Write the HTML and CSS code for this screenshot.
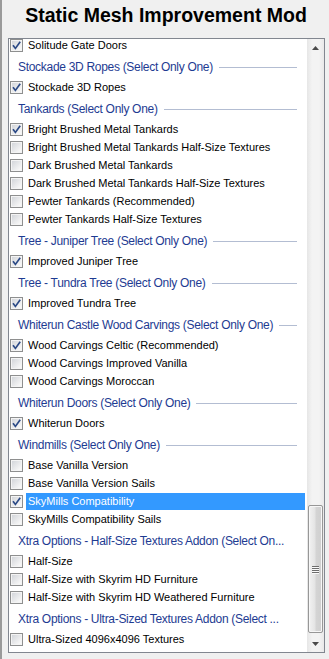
FILE: index.html
```html
<!DOCTYPE html>
<html lang="en">

<head>
  <meta charset="UTF-8">
  <title>Static Mesh Improvement Mod</title>
  <link rel="stylesheet" href="styles.css">
</head>

<body>
  <h1 class="title">Static Mesh Improvement Mod</h1>

  <div class="listbox">
    <div class="items">
      <div class="list">
        <div class="item"><span class="box on"><svg width="13" height="13"><path d="M3 6.2 L5.4 9.4 L10.2 2.8" /></svg></span><span class="label">Solitude Gate Doors</span></div>
        <div class="group"><span class="gtext">Stockade 3D Ropes (Select Only One)</span><span class="rule"></span></div>
        <div class="item"><span class="box on"><svg width="13" height="13"><path d="M3 6.2 L5.4 9.4 L10.2 2.8" /></svg></span><span class="label">Stockade 3D Ropes</span></div>
        <div class="group"><span class="gtext">Tankards (Select Only One)</span><span class="rule"></span></div>
        <div class="item"><span class="box on"><svg width="13" height="13"><path d="M3 6.2 L5.4 9.4 L10.2 2.8" /></svg></span><span class="label">Bright Brushed Metal Tankards</span></div>
        <div class="item"><span class="box"></span><span class="label">Bright Brushed Metal Tankards Half-Size Textures</span></div>
        <div class="item"><span class="box"></span><span class="label">Dark Brushed Metal Tankards</span></div>
        <div class="item"><span class="box"></span><span class="label">Dark Brushed Metal Tankards Half-Size Textures</span></div>
        <div class="item"><span class="box"></span><span class="label">Pewter Tankards (Recommended)</span></div>
        <div class="item"><span class="box"></span><span class="label">Pewter Tankards Half-Size Textures</span></div>
        <div class="group"><span class="gtext">Tree - Juniper Tree (Select Only One)</span><span class="rule"></span></div>
        <div class="item"><span class="box on"><svg width="13" height="13"><path d="M3 6.2 L5.4 9.4 L10.2 2.8" /></svg></span><span class="label">Improved Juniper Tree</span></div>
        <div class="group"><span class="gtext">Tree - Tundra Tree (Select Only One)</span><span class="rule"></span></div>
        <div class="item"><span class="box on"><svg width="13" height="13"><path d="M3 6.2 L5.4 9.4 L10.2 2.8" /></svg></span><span class="label">Improved Tundra Tree</span></div>
        <div class="group"><span class="gtext">Whiterun Castle Wood Carvings (Select Only One)</span><span class="rule"></span></div>
        <div class="item"><span class="box on"><svg width="13" height="13"><path d="M3 6.2 L5.4 9.4 L10.2 2.8" /></svg></span><span class="label">Wood Carvings Celtic (Recommended)</span></div>
        <div class="item"><span class="box"></span><span class="label">Wood Carvings Improved Vanilla</span></div>
        <div class="item"><span class="box"></span><span class="label">Wood Carvings Moroccan</span></div>
        <div class="group"><span class="gtext">Whiterun Doors (Select Only One)</span><span class="rule"></span></div>
        <div class="item"><span class="box on"><svg width="13" height="13"><path d="M3 6.2 L5.4 9.4 L10.2 2.8" /></svg></span><span class="label">Whiterun Doors</span></div>
        <div class="group"><span class="gtext">Windmills (Select Only One)</span><span class="rule"></span></div>
        <div class="item"><span class="box"></span><span class="label">Base Vanilla Version</span></div>
        <div class="item"><span class="box"></span><span class="label">Base Vanilla Version Sails</span></div>
        <div class="item selected"><span class="box on"><svg width="13" height="13"><path d="M3 6.2 L5.4 9.4 L10.2 2.8" /></svg></span><span class="label">SkyMills Compatibility</span></div>
        <div class="item"><span class="box"></span><span class="label">SkyMills Compatibility Sails</span></div>
        <div class="group"><span class="gtext">Xtra Options - Half-Size Textures Addon (Select On...</span></div>
        <div class="item"><span class="box"></span><span class="label">Half-Size</span></div>
        <div class="item"><span class="box"></span><span class="label">Half-Size with Skyrim HD Furniture</span></div>
        <div class="item"><span class="box"></span><span class="label">Half-Size with Skyrim HD Weathered Furniture</span></div>
        <div class="group"><span class="gtext">Xtra Options - Ultra-Sized Textures Addon (Select ...</span></div>
        <div class="item"><span class="box"></span><span class="label">Ultra-Sized 4096x4096 Textures</span></div>
      </div>
    </div>

    <div class="scrollbar">
      <div class="arrow"><svg width="7" height="4"><path d="M0 4 L3.5 0 L7 4 Z" /></svg></div>
      <div class="track">
        <div class="thumb">
          <span class="grip"></span><span class="grip"></span><span class="grip"></span><span class="grip"></span>
        </div>
      </div>
      <div class="arrow"><svg width="7" height="4"><path d="M0 0 L3.5 4 L7 0 Z" /></svg></div>
    </div>
  </div>
</body>

</html>
```

FILE: styles.css
```css
/* Window */
body {
  margin: 0;
  height: 659px;
  background-color: #f0f0f0;
  border-left: 2px solid #9a9a9a;
  box-sizing: border-box;
  font-family: "Liberation Sans", Arial, sans-serif;
  overflow: hidden;
}

.title {
  margin: 0;
  padding: 4px 0 0 1px;
  font-size: 19.5px;
  line-height: 23px;
  font-weight: bold;
  text-align: center;
  color: #000;
}

/* List box with the checkboxes */
.listbox {
  display: flex;
  width: 317px;
  height: 615px;
  margin: 11px 0 0 6px;
  border: 1px solid #828790;
  background-color: #fff;
  box-sizing: border-box;
}

.items {
  flex: 1;
  overflow: hidden;
}

.list {
  margin-top: -3px;
}

.item {
  display: flex;
  align-items: center;
  height: 18px;
  padding-left: 1px;
  font-size: 11px;
  color: #000;
}

.box {
  width: 13px;
  height: 13px;
  flex: none;
  border: 1px solid #8e8f8f;
  box-sizing: border-box;
  background: linear-gradient(135deg, #cfd2d7, #f6f6f6 80%);
  box-shadow: inset 0 0 0 1px #f4f4f4;
}

.box svg {
  display: block;
  margin: -1px;
}

.box path {
  fill: none;
  stroke: #2c4a86;
  stroke-width: 1.7;
}

.label {
  flex: 1;
  height: 17px;
  line-height: 17px;
  margin: 1px 2px 0 3px;
  padding-left: 2px;
  white-space: nowrap;
}

.selected .label {
  background-color: #3399ff;
  color: #fff;
}

.group {
  display: flex;
  align-items: center;
  height: 24px;
  padding: 2px 10px 0 9px;
  box-sizing: border-box;
}

.gtext {
  font-size: 12px;
  letter-spacing: -0.3px;
  color: #1e3b92;
  white-space: nowrap;
}

.rule {
  flex: 1;
  height: 1px;
  margin-left: 6px;
  background-color: #b3bdd2;
}

/* Scroll bar */
.scrollbar {
  display: flex;
  flex-direction: column;
  width: 17px;
  background: linear-gradient(to right, #e6e6e6, #f3f3f3 30%, #f3f3f3 70%, #e9e9e9);
}

.arrow {
  height: 17px;
  display: flex;
  align-items: center;
  justify-content: center;
}

.arrow path {
  fill: #4b4b4b;
}

.track {
  flex: 1;
  display: flex;
  flex-direction: column;
  justify-content: flex-end;
  padding-bottom: 2px;
}

.thumb {
  height: 126px;
  margin: 0 1px;
  border: 1px solid #979797;
  border-radius: 2px;
  background: linear-gradient(to right, #f2f2f2, #e4e4e4 45%, #d4d4d4 55%, #cfcfcf);
  box-shadow: inset 0 0 0 1px #f7f7f7;
  display: flex;
  flex-direction: column;
  align-items: center;
  justify-content: center;
  gap: 1px;
}

.grip {
  width: 7px;
  height: 1px;
  background-color: #6d6d6d;
  box-shadow: 0 1px 0 #fafafa;
}
```
